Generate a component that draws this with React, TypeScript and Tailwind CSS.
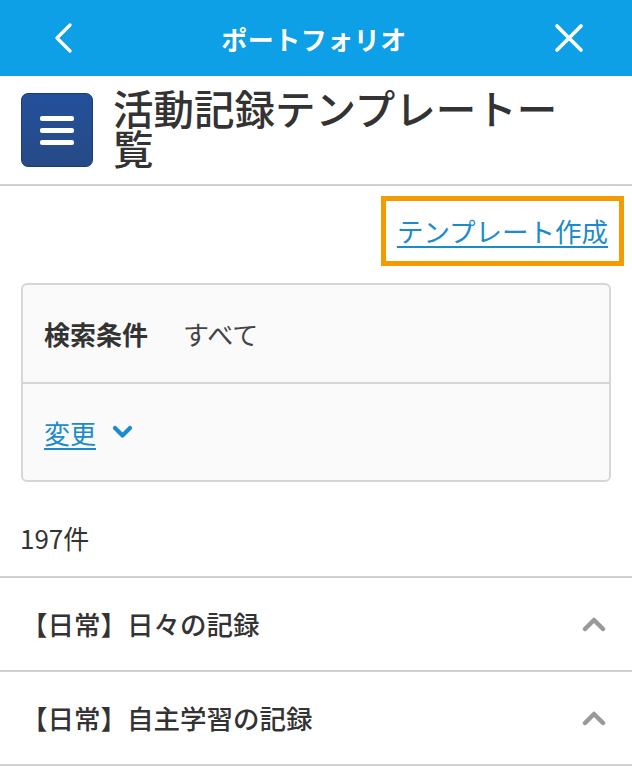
import React from 'react'

const FONT = { fontFamily: '"Noto Sans CJK JP", "Noto Sans", sans-serif' }

const ITEMS = ['【日常】日々の記録', '【日常】自主学習の記録']

export default function App() {
  return (
    <div className="w-[632px] min-h-[767px] bg-white text-[#333]" style={FONT}>
      {/* top bar */}
      <header className="h-[76px] bg-[#0ea0e6] flex items-center justify-between px-[52px] pr-[48px]">
        <svg width="22" height="30" viewBox="0 0 22 30" fill="none">
          <polyline points="18,2 5,15 18,28" stroke="white" strokeWidth="3.2" strokeLinecap="round" strokeLinejoin="round" />
        </svg>
        <h1 className="text-[26px] font-bold text-white tracking-[0.5px]">ポートフォリオ</h1>
        <svg width="30" height="30" viewBox="0 0 30 30" fill="none">
          <path d="M3 3 L27 27 M27 3 L3 27" stroke="white" strokeWidth="3.6" strokeLinecap="round" />
        </svg>
      </header>

      {/* page title */}
      <div className="h-[110px] border-b-2 border-[#d0d0d0] flex items-center pl-[21px] pr-[40px] gap-[20px]">
        <div className="w-[72px] h-[74px] shrink-0 rounded-[7px] border border-[#1b3d72] bg-gradient-to-b from-[#23509b] to-[#264a86] flex flex-col items-center justify-center gap-[7px]">
          <span className="block w-[34px] h-[5px] rounded-[2px] bg-white" />
          <span className="block w-[34px] h-[5px] rounded-[2px] bg-white" />
          <span className="block w-[34px] h-[5px] rounded-[2px] bg-white" />
        </div>
        <h2 className="text-[40.5px] leading-[40px] font-medium text-[#333] -mt-[4px]">活動記録テンプレートー覧</h2>
      </div>

      {/* create link */}
      <div className="flex justify-end pt-[10px] pr-[8px]">
        <div className="w-[243px] h-[70px] border-[5px] border-[#f29c00] flex items-center justify-center">
          <a className="text-[26.5px] text-[#1b8bcb] underline underline-offset-[4px] decoration-[1.5px]" href="#">
            テンプレート作成
          </a>
        </div>
      </div>

      {/* search condition */}
      <div className="mx-[21px] mt-[17px] border-2 border-[#d6d6d6] rounded-[6px] bg-[#fafafa]">
        <div className="h-[97px] flex items-center px-[21px] gap-[35px] text-[26px]">
          <span className="font-bold text-[#333]">検索条件</span>
          <span className="text-[#444]">すべて</span>
        </div>
        <div className="h-[98px] flex items-center px-[21px] gap-[16px] border-t-2 border-[#d6d6d6]">
          <a className="text-[26px] text-[#1b8bcb] underline underline-offset-[4px] decoration-[1.5px]" href="#">変更</a>
          <svg width="21" height="14" viewBox="0 0 21 14" fill="none">
            <polyline points="3,3 10.5,10.5 18,3" stroke="#1b8bcb" strokeWidth="4.2" strokeLinecap="round" strokeLinejoin="round" />
          </svg>
        </div>
      </div>

      {/* count */}
      <div className="h-[94px] pt-[16px] flex items-center px-[20px] text-[26px] text-[#333]">197件</div>

      {/* list */}
      <ul className="border-t-2 border-[#d0d0d0]">
        {ITEMS.map((t) => (
          <li key={t} className="h-[94px] flex items-center justify-between border-b-2 border-[#d0d0d0] pl-[21px] pr-[26px]">
            <span className="text-[26.5px] font-medium text-[#333]">{t}</span>
            <svg width="24" height="16" viewBox="0 0 24 16" fill="none">
              <polyline points="3,13 12,4 21,13" stroke="#999" strokeWidth="4.5" strokeLinecap="round" strokeLinejoin="round" />
            </svg>
          </li>
        ))}
      </ul>
    </div>
  )
}
